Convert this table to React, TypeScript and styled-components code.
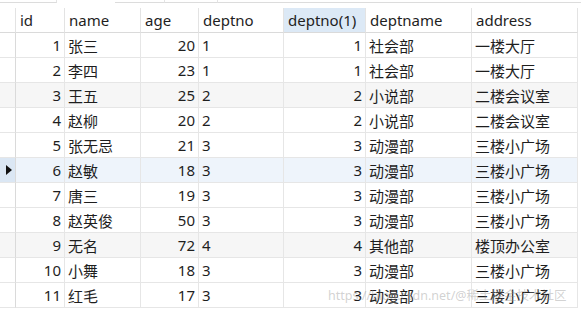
import React from "react";
import styled, { createGlobalStyle } from "styled-components";

const Global = createGlobalStyle`
  html, body { margin: 0; padding: 0; background: #ffffff; }
  body { width: 581px; height: 312px; overflow: hidden; font-family: "Noto Sans", "Noto Sans CJK SC", sans-serif; }
  * { box-sizing: border-box; }
`;

const COLS = "16px 49px 76px 58px 85px 82px 106px 106px";

const Page = styled.div`
  position: relative;
  width: 581px;
  height: 312px;
  background: #fff;
  overflow: hidden;
`;

const TopStrip = styled.div`
  height: 8px;
  display: flex;
  align-items: flex-start;
`;

const TabLine = styled.div<{ $w: number; $gap?: number }>`
  width: ${(p) => p.$w}px;
  margin-left: ${(p) => p.$gap ?? 0}px;
  height: 3px;
  border-bottom: 1px solid #dcdcdc;
  border-right: 1px solid #e4e4e4;
`;

const FillLine = styled.div`
  flex: 1;
  height: 3px;
  border-bottom: 1px solid #dcdcdc;
`;

const Grid = styled.div`
  display: grid;
  grid-template-columns: ${COLS};
  grid-auto-rows: 25px;
  width: 578px;
  color: #1e1e1e;
  font-size: 15px;
`;

const HeadCell = styled.div<{ $active?: boolean }>`
  display: flex;
  align-items: center;
  padding: 0 4px;
  border-right: 1px solid #e3e3e3;
  border-bottom: 1px solid #dadada;
  background: ${(p) => (p.$active ? "#dce9f6" : "#ffffff")};
  white-space: nowrap;
  overflow: hidden;
`;

const Cell = styled.div<{ $right?: boolean; $bg: string }>`
  display: flex;
  align-items: center;
  justify-content: ${(p) => (p.$right ? "flex-end" : "flex-start")};
  padding: 0 3px 0 3px;
  border-right: 1px solid #e6e6e6;
  border-bottom: 1px solid #e6e6e6;
  background: ${(p) => p.$bg};
  white-space: nowrap;
  overflow: hidden;
`;

const Indicator = styled.div<{ $sel?: boolean; $bg: string }>`
  display: flex;
  align-items: center;
  justify-content: center;
  border-right: 1px solid #dadada;
  border-bottom: 1px solid #e6e6e6;
  background: ${(p) => (p.$sel ? "#dbe7f4" : p.$bg)};
`;

const Arrow = styled.div`
  width: 0;
  height: 0;
  border-top: 5px solid transparent;
  border-bottom: 5px solid transparent;
  border-left: 6px solid #111;
  margin-left: 2px;
`;

const Watermark = styled.div`
  position: absolute;
  left: 328px;
  top: 287px;
  font-size: 12.5px;
  line-height: 18px;
  color: rgba(140, 140, 140, 0.4);
  white-space: nowrap;
`;

const headers = ["id", "name", "age", "deptno", "deptno(1)", "deptname", "address"];

const rows: [number, string, number, number, number, string, string][] = [
  [1, "张三", 20, 1, 1, "社会部", "一楼大厅"],
  [2, "李四", 23, 1, 1, "社会部", "一楼大厅"],
  [3, "王五", 25, 2, 2, "小说部", "二楼会议室"],
  [4, "赵柳", 20, 2, 2, "小说部", "二楼会议室"],
  [5, "张无忌", 21, 3, 3, "动漫部", "三楼小广场"],
  [6, "赵敏", 18, 3, 3, "动漫部", "三楼小广场"],
  [7, "唐三", 19, 3, 3, "动漫部", "三楼小广场"],
  [8, "赵英俊", 50, 3, 3, "动漫部", "三楼小广场"],
  [9, "无名", 72, 4, 4, "其他部", "楼顶办公室"],
  [10, "小舞", 18, 3, 3, "动漫部", "三楼小广场"],
  [11, "红毛", 17, 3, 3, "动漫部", "三楼小广场"],
];

const rightAligned = [true, false, true, false, true, false, false];

export default function App() {
  return (
    <Page>
      <Global />
      <TopStrip>
        <TabLine $w={57} />
        <TabLine $w={50} $gap={58} />
        <TabLine $w={53} />
        <FillLine />
      </TopStrip>
      <Grid>
        <HeadCell />
        {headers.map((h) => (
          <HeadCell key={h} $active={h === "deptno(1)"}>
            {h}
          </HeadCell>
        ))}
        {rows.map((r) => {
          const sel = r[0] === 6;
          const bg = sel ? "#eef4fb" : r[0] === 3 || r[0] === 9 ? "#f6f6f6" : "#ffffff";
          return (
            <React.Fragment key={r[0]}>
              <Indicator $sel={sel} $bg={bg}>{sel && <Arrow />}</Indicator>
              {r.map((v, i) => (
                <Cell key={i} $right={rightAligned[i]} $bg={bg}>
                  {v}
                </Cell>
              ))}
            </React.Fragment>
          );
        })}
      </Grid>
      <Watermark>https://blog.csdn.net/@稀土掘金技术社区</Watermark>
    </Page>
  );
}
